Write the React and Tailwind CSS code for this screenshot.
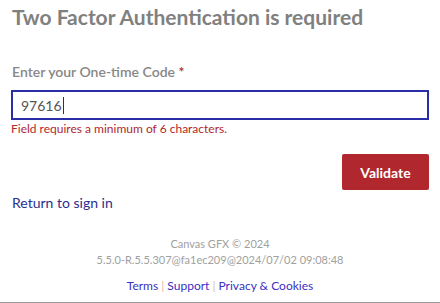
export default function App() {
  return (
    <div className="flex h-[303px] w-[440px] flex-col overflow-hidden bg-white font-['Lato','Liberation_Sans',sans-serif]">
      <div className="flex-1 px-3">
        <h1 className="pt-[3px] text-[21px] font-bold leading-[28px] text-[#808080]">
          Two Factor Authentication is required
        </h1>

        <label className="mt-[31px] block text-[14px] font-semibold leading-[20px] text-[#878787]">
          Enter your One-time Code <span className="text-[#b0282e]">*</span>
        </label>

        <div className="-ml-px mt-[8px] flex h-[30px] w-[418px] items-center border-2 border-[#2a2ea6] px-[8px] text-[14px] text-[#555]">
          97616<span className="ml-px inline-block h-[17px] w-px bg-[#333]" />
        </div>
        <p className="-ml-px mt-[1px] text-[12px] leading-[16px] text-[#b0282e]">
          Field requires a minimum of 6 characters.
        </p>

        <div className="mt-[17px] flex justify-end">
          <button className="mr-[-1px] h-[36px] w-[87px] rounded-[2px] bg-[#b0282e] text-[14px] font-bold text-white">
            Validate
          </button>
        </div>

        <a href="#" className="mt-[3px] block text-[14px] leading-[20px] text-[#2b2e8c]">
          Return to sign in
        </a>

        <div className="mt-[23px] text-center text-[11px] leading-[16px] text-[#a0a0a0]">
          <p>Canvas GFX © 2024</p>
          <p>5.5.0-R.5.5.307@fa1ec209@2024/07/02 09:08:48</p>
          <p className="mt-[10px] text-[12px] text-[#3a2fc2]">
            <a href="#">Terms</a> <span className="text-[#d8bca0]">|</span>{" "}
            <a href="#">Support</a> <span className="text-[#d8bca0]">|</span>{" "}
            <a href="#">Privacy &amp; Cookies</a>
          </p>
        </div>
      </div>
      <div className="h-px w-full bg-[#9a9a9a]" />
    </div>
  );
}
